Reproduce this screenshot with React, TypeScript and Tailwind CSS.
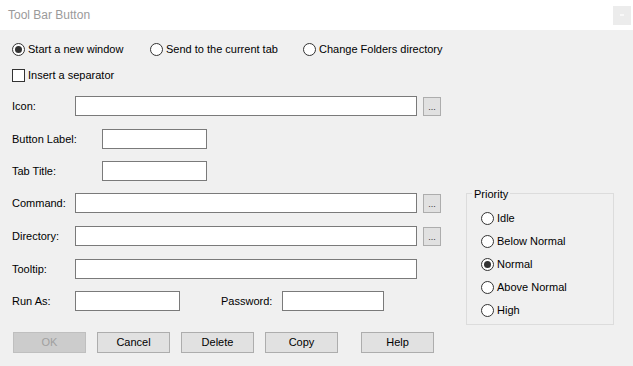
import React from "react";

const Radio = ({ checked, label }: { checked?: boolean; label: string }) => (
  <div className="flex items-center h-[14px]">
    <span className="w-[13px] h-[13px] rounded-full border border-[#333333] bg-white flex items-center justify-center">
      {checked && <span className="w-[7px] h-[7px] rounded-full bg-[#333333]"></span>}
    </span>
    <span className="ml-[3px]">{label}</span>
  </div>
);

const Field = ({ w }: { w: string }) => (
  <div className={`h-[20px] border border-[#7a7a7a] bg-white ${w}`}></div>
);

const Browse = () => (
  <div className="ml-[6px] w-[18px] h-[19px] border border-[#adadad] bg-[#e1e1e1] flex items-end justify-center pb-[3px]">
    <span className="text-[9px] leading-none text-[#333]">...</span>
  </div>
);

const Btn = ({ label, disabled, cls }: { label: string; disabled?: boolean; cls?: string }) => (
  <div
    className={`w-[73px] h-[21px] flex items-center justify-center border ${
      disabled
        ? "bg-[#cccccc] border-[#bfbfbf] text-[#a0a0a0]"
        : "bg-[#e1e1e1] border-[#adadad] text-black"
    } ${cls ?? ""}`}
  >
    {label}
  </div>
);

const App = () => {
  const priorities = ["Idle", "Below Normal", "Normal", "Above Normal", "High"];
  return (
    <div
      className="w-[633px] h-[366px] bg-[#f0f0f0] text-[11px] text-black overflow-hidden"
      style={{ fontFamily: '"Liberation Sans", Arial, sans-serif' }}
    >
      {/* title bar */}
      <div className="h-[30px] bg-white flex items-center justify-between pl-[8px] pr-[2px]">
        <span className="text-[12px] text-[#9a9a9a]">Tool Bar Button</span>
        <div className="w-[18px] h-[19px] bg-[#ececec] flex items-center justify-center">
          <span className="w-[4px] h-[2px] bg-[#f8f8f8]"></span>
        </div>
      </div>

      <div className="pl-[12px]">
        <div className="flex mt-[12px]">
          <div className="w-[138px]">
            <Radio checked label="Start a new window" />
          </div>
          <div className="w-[153px]">
            <Radio label="Send to the current tab" />
          </div>
          <Radio label="Change Folders directory" />
        </div>

        <div className="flex items-center h-[14px] mt-[12px]">
          <span className="w-[13px] h-[13px] border border-[#333333] bg-white"></span>
          <span className="ml-[3px]">Insert a separator</span>
        </div>

        {/* icon */}
        <div className="flex items-center h-[20px] mt-[14px]">
          <span className="w-[63px]">Icon:</span>
          <Field w="w-[342px]" />
          <Browse />
        </div>
        <div className="flex items-center h-[20px] mt-[13px]">
          <span className="w-[90px]">Button Label:</span>
          <Field w="w-[105px]" />
        </div>
        <div className="flex items-center h-[20px] mt-[12px]">
          <span className="w-[90px]">Tab Title:</span>
          <Field w="w-[105px]" />
        </div>

        <div className="flex items-start mt-[12px]">
          <div className="w-[429px]">
            <div className="flex items-center h-[20px]">
              <span className="w-[63px]">Command:</span>
              <Field w="w-[342px]" />
              <Browse />
            </div>
            <div className="flex items-center h-[20px] mt-[13px]">
              <span className="w-[63px]">Directory:</span>
              <Field w="w-[342px]" />
              <Browse />
            </div>
            <div className="flex items-center h-[20px] mt-[13px]">
              <span className="w-[63px]">Tooltip:</span>
              <Field w="w-[342px]" />
            </div>
            <div className="flex items-center h-[20px] mt-[12px]">
              <span className="w-[63px]">Run As:</span>
              <Field w="w-[105px]" />
              <span className="ml-[41px] w-[61px]">Password:</span>
              <Field w="w-[102px]" />
            </div>
          </div>

          <div className="relative ml-[25px] w-[148px] h-[132px] border border-[#dcdcdc]">
            <span className="absolute -top-[8px] left-[5px] px-[2px] bg-[#f0f0f0]">Priority</span>
            <div className="flex flex-col gap-[9px] pt-[17px] pl-[14px]">
              {priorities.map((p) => (
                <Radio key={p} label={p} checked={p === "Normal"} />
              ))}
            </div>
          </div>
        </div>

        <div className="flex mt-[7px] pl-[1px]">
          <Btn label="OK" disabled />
          <Btn label="Cancel" cls="ml-[11px]" />
          <Btn label="Delete" cls="ml-[11px]" />
          <Btn label="Copy" cls="ml-[11px]" />
          <Btn label="Help" cls="ml-[23px]" />
        </div>
      </div>
    </div>
  );
};

export default App;
